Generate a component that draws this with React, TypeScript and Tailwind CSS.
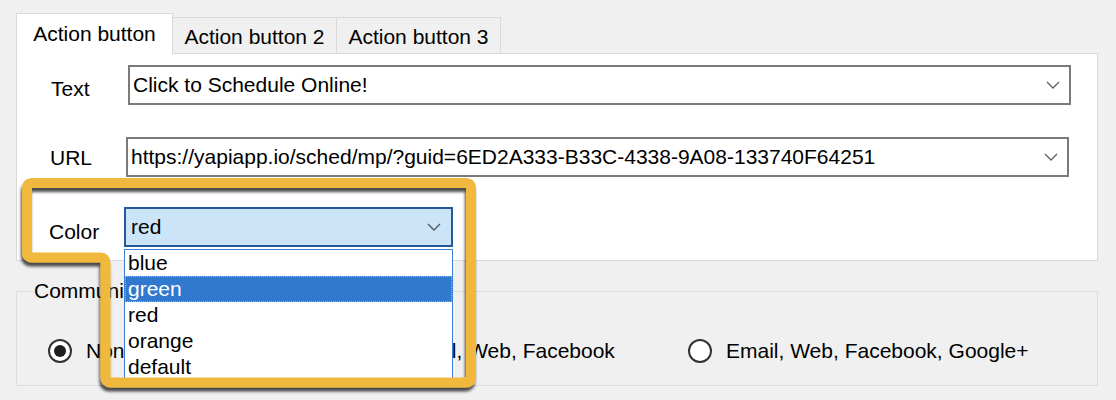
import React from 'react';

const Chevron = ({ color = '#606060' }: { color?: string }) => (
  <svg width="14" height="8" viewBox="0 0 14 8" fill="none">
    <polyline points="1,1 7,7 13,1" stroke={color} strokeWidth="1.3" />
  </svg>
);

const Radio = ({ checked }: { checked?: boolean }) => (
  <div className="w-[24px] h-[24px] rounded-full border-2 border-[#333] bg-white flex items-center justify-center shrink-0">
    {checked && <div className="w-[12px] h-[12px] rounded-full bg-[#1f1f1f]" />}
  </div>
);

const colors = ['blue', 'green', 'red', 'orange', 'default'];

function App() {
  return (
    <div className="relative w-[1116px] h-[400px] overflow-hidden bg-[#f0f0f0] text-black text-[21px] leading-[24px] font-['Liberation_Sans',Arial,sans-serif] pt-[13px] pl-[16px] pr-[18px]">
      {/* Tabs */}
      <div className="flex items-end h-[40px]">
        <div className="relative z-10 -mb-px w-[157px] h-[41px] bg-white border border-b-0 border-[#d9d9d9] flex items-center justify-center">
          Action button
        </div>
        <div className="w-[164px] h-[36px] border-t border-r border-[#d9d9d9] flex items-center justify-center pt-[2px]">
          Action button 2
        </div>
        <div className="w-[164px] h-[36px] border-t border-r border-[#d9d9d9] flex items-center justify-center pt-[2px]">
          Action button 3
        </div>
      </div>

      {/* Tab panel */}
      <div className="h-[208px] bg-white border border-[#d9d9d9]">
        <div className="flex items-start mt-[11px]">
          <div className="w-[111px] pl-[34px] pt-[12px]">Text</div>
          <div className="w-[943px] h-[40px] border-2 border-[#7a7a7a] flex items-center justify-between pl-[3px] pr-[9px]">
            <span>Click to Schedule Online!</span>
            <Chevron />
          </div>
        </div>
        <div className="flex items-start mt-[32px]">
          <div className="w-[109px] pl-[33px] pt-[9px]">URL</div>
          <div className="w-[943px] h-[40px] border-2 border-[#7a7a7a] flex items-center justify-between pl-[3px] pr-[9px]">
            <span>https://yapiapp.io/sched/mp/?guid=6ED2A333-B33C-4338-9A08-133740F64251</span>
            <Chevron />
          </div>
        </div>
        <div className="flex items-start mt-[30px]">
          <div className="w-[107px] pl-[32px] pt-[13px]">Color</div>
          <div className="relative z-20">
            <div className="w-[329px] h-[40px] border-2 border-[#25599c] bg-[#cce4f7] flex items-center justify-between pl-[5px] pr-[10px]">
              <span>red</span>
              <Chevron color="#555" />
            </div>
            {/* Open dropdown list */}
            <div className="absolute left-0 top-full mt-[2px] w-[329px] h-[136px] bg-white border border-[#3a7fd6]">
              {colors.map((c) => (
                <div
                  key={c}
                  className={
                    c === 'green'
                      ? 'h-[26px] leading-[24px] pl-[2px] bg-[#3178cf] text-white border border-dotted border-[#f0a35e]'
                      : 'h-[26px] leading-[26px] pl-[3px]'
                  }
                >
                  {c}
                </div>
              ))}
            </div>
          </div>
        </div>
      </div>

      {/* Communication group */}
      <fieldset className="mt-[18px] h-[107px] border border-[#dcdcdc]">
        <legend className="ml-[16px] px-[1px] leading-[24px]">Communication</legend>
        <div className="flex items-center h-[26px] mt-[35px] pl-[31px]">
          <div className="w-[318px] flex items-center gap-[14px]">
            <Radio checked />
            <span>None</span>
          </div>
          <div className="w-[322px] flex items-center gap-[14px]">
            <Radio />
            <span>Email, Web, Facebook</span>
          </div>
          <div className="flex items-center gap-[14px]">
            <Radio />
            <span>Email, Web, Facebook, Google+</span>
          </div>
        </div>
      </fieldset>

      {/* Highlight annotation */}
      <svg className="absolute left-0 top-0 z-30 pointer-events-none" width="1116" height="400" viewBox="0 0 1116 400">
        <defs>
          <filter id="sh" x="-10%" y="-10%" width="120%" height="130%">
            <feDropShadow dx="-1" dy="4" stdDeviation="1.8" floodColor="#000" floodOpacity="0.7" />
          </filter>
        </defs>
        <path
          d="M 32 183 H 466 Q 471 183 471 188 V 377.5 Q 471 382.5 466 382.5 H 110.5 Q 105.5 382.5 105.5 377.5 V 262.5 Q 105.5 257.5 100.5 257.5 H 32 Q 27 257.5 27 252.5 V 188 Q 27 183 32 183 Z"
          fill="none"
          stroke="#f0b83d"
          strokeWidth="10"
          filter="url(#sh)"
        />
      </svg>
    </div>
  );
}

export default App;
